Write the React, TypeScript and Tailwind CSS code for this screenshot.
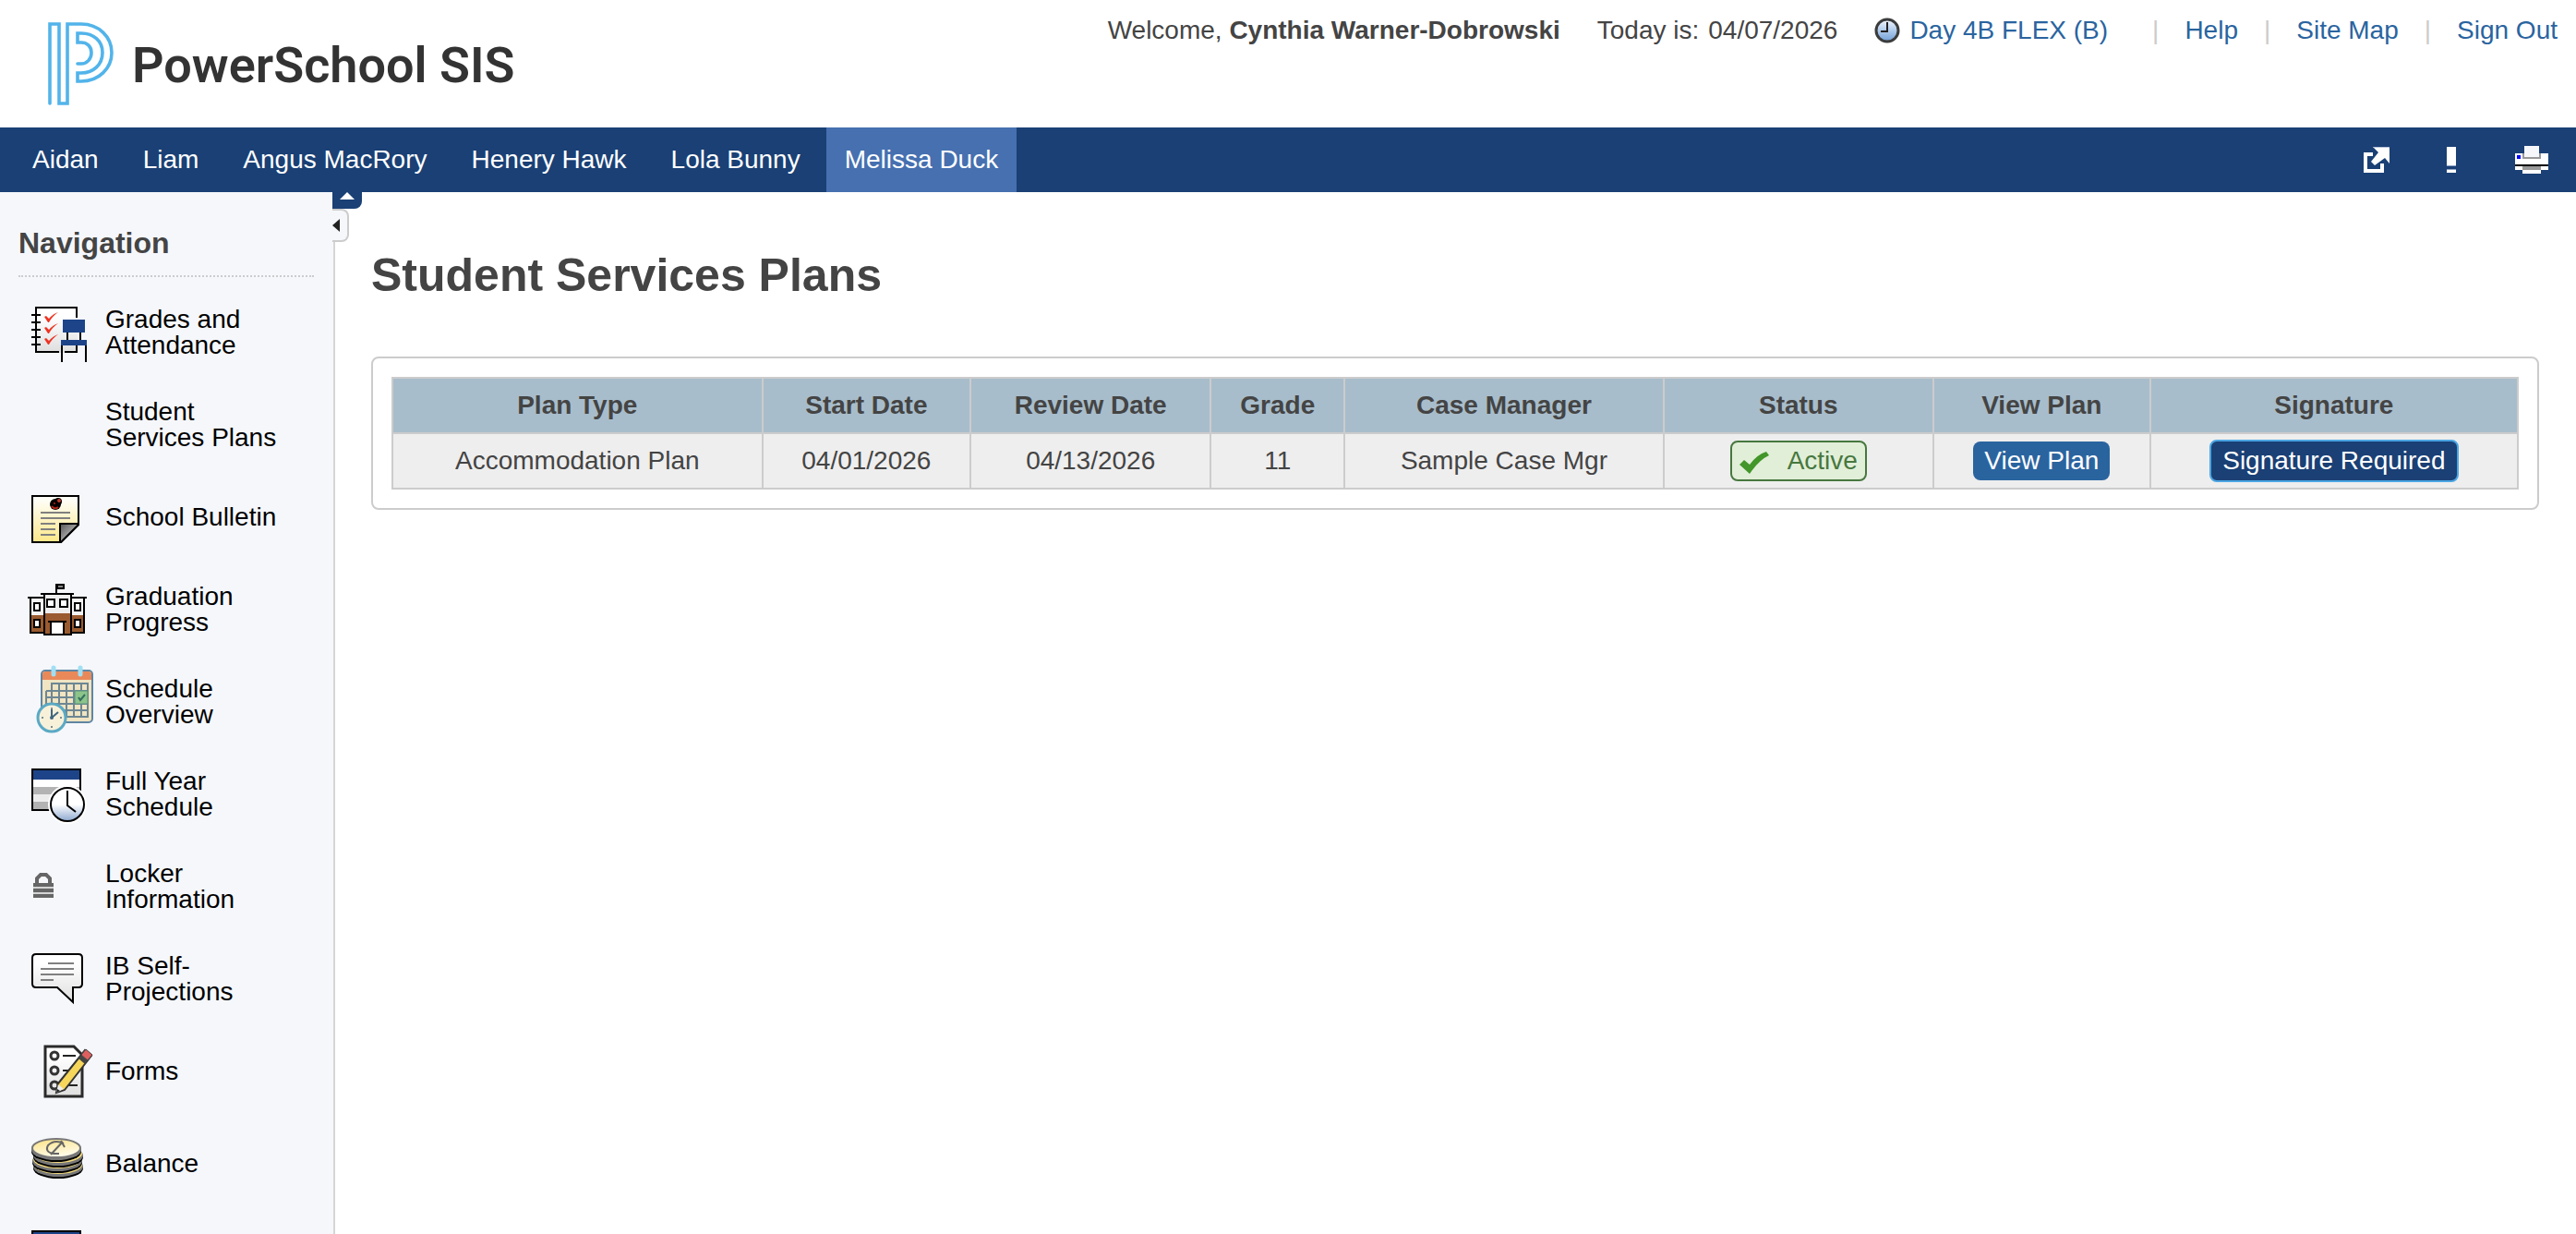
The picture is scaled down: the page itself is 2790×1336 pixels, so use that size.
import type { ReactNode } from "react"

const students = ["Aidan", "Liam", "Angus MacRory", "Henery Hawk", "Lola Bunny", "Melissa Duck"]
const activeStudent = "Melissa Duck"

const topLinks = ["Help", "Site Map", "Sign Out"]

const columns = [
  { label: "Plan Type", width: "w-[17.4%]" },
  { label: "Start Date", width: "w-[9.8%]" },
  { label: "Review Date", width: "w-[11.3%]" },
  { label: "Grade", width: "w-[6.3%]" },
  { label: "Case Manager", width: "w-[15%]" },
  { label: "Status", width: "w-[12.7%]" },
  { label: "View Plan", width: "w-[10.2%]" },
  { label: "Signature", width: "w-[17.3%]" },
]

function NavIcon({ children }: { children?: ReactNode }) {
  return (
    <svg viewBox="0 0 80 80" className="h-20 w-20 shrink-0" fill="none" aria-hidden="true">
      {children}
    </svg>
  )
}

function GradesIcon() {
  return (
    <NavIcon>
      <defs>
        <linearGradient id="paper" x1="0" y1="0" x2="0" y2="1">
          <stop offset="0.2" stopColor="#fff" />
          <stop offset="1" stopColor="#dedede" />
        </linearGradient>
      </defs>
      <path d="M10 12H56V62H10Z" fill="url(#paper)" />
      <path d="M55 24V13H11V61H36M42 61H55V54" stroke="#000" strokeWidth="2" />
      <path d="M6 21H16M6 29H16M6 37H16M6 45H16M6 53H16" stroke="#000" strokeWidth="2" />
      {[19, 31, 43].map((y) => (
        <path key={y} d={`M20 ${y + 4}l2-1 3 3 q4-5 10-7 q-6 4-10 11 h-1z`} fill="#ee3322" />
      ))}
      <path d="M45 40V48M59 40V48M39 54V72M65 54V72" stroke="#000" strokeWidth="2" />
      <path d="M40 26H64V40H40ZM38 48H66V54H38Z" fill="#1d4489" />
    </NavIcon>
  )
}

function BulletinIcon() {
  return (
    <NavIcon>
      <defs>
        <linearGradient id="note" x1="0" y1="0" x2="0" y2="1">
          <stop offset="0.1" stopColor="#fffef6" />
          <stop offset="1" stopColor="#fde788" />
        </linearGradient>
        <linearGradient id="curl" x1="0" y1="0" x2="0.7" y2="0.7">
          <stop offset="0" stopColor="#555" />
          <stop offset="1" stopColor="#bbb" />
        </linearGradient>
      </defs>
      <path d="M7 17H57V48L38 67H7Z" fill="url(#note)" stroke="#000" strokeWidth="2" />
      <path d="M16 35H48M16 41H48M16 47H32M16 53H32M16 59H32" stroke="#808080" strokeWidth="2" />
      <path d="M37 67V47H57V48L38 67Z" fill="url(#curl)" stroke="#000" strokeWidth="2" />
      <circle cx="32" cy="26" r="6" fill="#000" />
      <circle cx="35" cy="23" r="4" fill="#000" />
      <path d="M28 28Q31 32 35 29" stroke="#b3261a" strokeWidth="2" />
      <circle cx="31" cy="25" r="1" fill="#b3261a" />
      <circle cx="36" cy="22" r="2" fill="#c03a2e" />
    </NavIcon>
  )
}

function SchoolIcon() {
  return (
    <NavIcon>
      <path d="M33 12V24" stroke="#000" strokeWidth="2" />
      <path d="M34 13H41V17H34Z" fill="#888" stroke="#000" strokeWidth="2" />
      <path d="M5 28H63V46H5Z" fill="#f4f4f4" />
      <path d="M5 46H63V65H5Z" fill="#9a5b30" />
      <path d="M20 24H49V44H20Z" fill="#efefef" />
      <path d="M20 44H49V67H20Z" fill="#9a5b30" />
      <path d="M2 27H19M50 27H66M16 23H52" stroke="#000" strokeWidth="2" />
      <path d="M5 27V65H19M63 27V65H50M20 23V67H49V23" stroke="#000" strokeWidth="2" />
      <path
        d="M9 33H15V41H9ZM53 33H59V41H53ZM9 51H15V59H9ZM53 51H59V59H53ZM23 29H31V37H23ZM37 29H45V37H37Z"
        fill="#fff"
        stroke="#000"
        strokeWidth="2"
      />
      <path d="M27 53H41V67H27Z" fill="#fff" stroke="#000" strokeWidth="2" />
      <path d="M24 53H44" stroke="#000" strokeWidth="2" />
    </NavIcon>
  )
}

function OverviewIcon() {
  return (
    <NavIcon>
      <rect x="17" y="6" width="55" height="56" rx="4" fill="#f0e4c2" stroke="#5f86a3" strokeWidth="2" />
      <path d="M18 16V10Q18 7 21 7H68Q71 7 71 10V16Z" fill="#e9895a" />
      <path
        d="M28 20H67V56H28ZM22 28H67M22 35H67M22 42H67M28 49H67M36 20V56M44 20V56M52 20V56M60 20V56M22 28V44"
        stroke="#6d8794"
        strokeWidth="2"
      />
      <path d="M53 28H67V42H53Z" fill="#8cc48a" stroke="#5c9080" />
      <path d="M57 35L59 38L64 32" stroke="#34705f" strokeWidth="2" />
      <path d="M30 3V10M59 3V10" stroke="#a0dff3" strokeWidth="5" strokeLinecap="round" />
      <circle cx="28" cy="57" r="15" fill="#f8f1da" stroke="#5aa9c4" strokeWidth="3" />
      <path d="M28 57L35 51M28 57V48" stroke="#3e6680" strokeWidth="2" />
      <circle cx="28" cy="57" r="2" fill="#3e6680" />
      <path d="M28 46V48M28 66V68M17 57H19M37 57H39" stroke="#7d8f95" strokeWidth="2" />
    </NavIcon>
  )
}

function YearIcon() {
  return (
    <NavIcon>
      <defs>
        <linearGradient id="face" x1="0" y1="0" x2="0" y2="1">
          <stop offset="0.5" stopColor="#fff" />
          <stop offset="1" stopColor="#8da8cf" />
        </linearGradient>
      </defs>
      <path d="M7 13H59V57H7Z" fill="#fff" />
      <path d="M7 13H59V24H7Z" fill="#1d4489" />
      <path d="M7 32H59V40H7ZM7 48H59V56H7Z" fill="#b3b3b3" />
      <path d="M7 40H59V48H7Z" fill="#ececec" />
      <path d="M7 13H59V57H7Z" stroke="#000" strokeWidth="2" />
      <circle cx="45" cy="51" r="21" fill="#fff" />
      <circle cx="45" cy="51" r="18" fill="url(#face)" stroke="#000" strokeWidth="2" />
      <path d="M45 36V52L54 59" stroke="#000" strokeWidth="2" />
    </NavIcon>
  )
}

function LockerIcon() {
  return (
    <NavIcon>
      <path d="M8 36H30V52H8Z" fill="#d4d4d4" />
      <path d="M12 37V31L16 27H22L26 31V37" stroke="#666" strokeWidth="4" />
      <path d="M8 38H30M8 44H30M8 50H30" stroke="#666" strokeWidth="4" />
    </NavIcon>
  )
}

function CommentIcon() {
  return (
    <NavIcon>
      <path
        d="M11 13H57Q61 13 61 17V45Q61 49 57 49H51V65L34 49H11Q7 49 7 45V17Q7 13 11 13Z"
        fill="url(#paper)"
        stroke="#000"
        strokeWidth="2"
      />
      <path d="M24 23H52M16 29H52M16 35H52M16 41H30" stroke="#808080" strokeWidth="2" />
    </NavIcon>
  )
}

function FormsIcon() {
  return (
    <NavIcon>
      <path d="M21 13H52L61 22V67H21Z" fill="url(#paper)" stroke="#2a2a2a" strokeWidth="3" />
      <path d="M40 23H54M40 39H50M44 55H56" stroke="#222" strokeWidth="2" />
      <g stroke="#333" strokeWidth="3">
        <circle cx="31" cy="23" r="4" />
        <circle cx="31" cy="39" r="4" />
        <circle cx="31" cy="55" r="4" />
      </g>
      <path d="M33 63L35 53L64 17L71 23L42 60Z" fill="#f6d65b" stroke="#333" strokeWidth="2" />
      <path d="M57 26L60 22L67 28L64 32Z" fill="#444" />
      <path d="M60 22L65 16L72 22L67 28Z" fill="#dd5f5f" stroke="#444" />
      <path d="M33 63L35 54L41 59Z" fill="#eee" />
      <path d="M33 63L34 59L37 61Z" fill="#222" />
    </NavIcon>
  )
}

function BalanceIcon() {
  return (
    <NavIcon>
      <defs>
        <linearGradient id="coin" x1="0" y1="0" x2="0.4" y2="1">
          <stop offset="0" stopColor="#fbe282" />
          <stop offset="1" stopColor="#fffbe8" />
        </linearGradient>
      </defs>
      {[
        [35, 44],
        [34, 38],
        [35, 32],
        [33, 26],
      ].map(([cx, cy]) => (
        <g key={cy}>
          <ellipse cx={cx} cy={cy + 1} rx="27" ry="11" fill="#000" />
          <ellipse cx={cx} cy={cy - 1} rx="27" ry="11" fill="#777" />
          <ellipse cx={cx} cy={cy - 3} rx="26" ry="10" fill="#f5dc7c" />
        </g>
      ))}
      <ellipse cx="33" cy="23" rx="26" ry="10" fill="url(#coin)" stroke="#777" strokeWidth="2" />
      <path d="M41 18Q31 13 24 20Q20 27 30 29L36 29M27 30L40 16M38 15L42 22" stroke="#666" strokeWidth="2" />
    </NavIcon>
  )
}

function CalendarIcon() {
  return (
    <NavIcon>
      <path d="M7 13H59V57H7Z" fill="#fff" />
      <path d="M7 13H59V24H7Z" fill="#1d4489" />
      <path d="M7 13H59V57H7Z" stroke="#000" strokeWidth="2" />
    </NavIcon>
  )
}

const navItems = [
  { label: "Grades and Attendance", icon: GradesIcon },
  { label: "Student Services Plans", icon: NavIcon },
  { label: "School Bulletin", icon: BulletinIcon },
  { label: "Graduation Progress", icon: SchoolIcon },
  { label: "Schedule Overview", icon: OverviewIcon },
  { label: "Full Year Schedule", icon: YearIcon },
  { label: "Locker Information", icon: LockerIcon },
  { label: "IB Self-Projections", icon: CommentIcon },
  { label: "Forms", icon: FormsIcon },
  { label: "Balance", icon: BalanceIcon },
  { label: "", icon: CalendarIcon },
]

function Logo() {
  return (
    <a href="#" className="flex items-center gap-5 text-[#333]">
      <svg viewBox="0 0 72 92" className="h-[92px] w-[72px]" fill="none" stroke="#52b4ea" strokeWidth="3.6" strokeLinecap="round">
        <path d="M3 89V3H13V89H22V3H37C56 3 70 17 70 34S56 65 37 65H33V56H37C50 56 60 47 60 34S50 13 37 13H33V23H37C43 23 48 27 48 34S43 46 37 46H33" />
      </svg>
      <span className="pt-1 font-[Roboto,sans-serif] text-[54px] leading-[60px] font-semibold">PowerSchool SIS</span>
    </a>
  )
}

function Header() {
  return (
    <header className="flex h-[138px] justify-between pr-5 pl-[51px]">
      <div className="flex items-center">
        <Logo />
      </div>
      <div className="flex h-[66px] items-center text-[#444]">
        <span>
          Welcome, <strong>Cynthia Warner-Dobrowski</strong>
        </span>
        <span className="ml-10 flex gap-[10px]">
          <span>Today is:</span>
          <span>04/07/2026</span>
        </span>
        <a href="#" className="ml-10 flex items-center gap-[10px] text-[#2a649f]">
          <svg viewBox="0 0 28 28" className="h-7 w-7" fill="none" aria-hidden="true">
            <defs>
              <linearGradient id="clock" x1="0" y1="0" x2="0" y2="1">
                <stop offset="0.1" stopColor="#e4eefa" />
                <stop offset="1" stopColor="#6f9fd8" />
              </linearGradient>
            </defs>
            <circle cx="14" cy="14" r="12" fill="url(#clock)" stroke="#3c3c3c" strokeWidth="3" />
            <path d="M14 5V15H7" stroke="#222" strokeWidth="2" />
          </svg>
          Day 4B FLEX (B)
        </a>
        <nav className="ml-5 flex">
          {topLinks.map((link) => (
            <span key={link} className="ml-7 flex gap-7">
              <span className="text-[#ccc]">|</span>
              <a href="#" className="text-[#2a649f]">
                {link}
              </a>
            </span>
          ))}
        </nav>
      </div>
    </header>
  )
}

function StudentBar() {
  return (
    <div className="flex h-[70px] items-stretch justify-between bg-[#1a4075] pr-[30px] pl-[15px] text-white">
      <nav className="flex gap-2">
        {students.map((name) => (
          <a
            key={name}
            href="#"
            className={`flex items-center px-5 ${name === activeStudent ? "bg-[#4670b0]" : ""}`}
          >
            {name}
          </a>
        ))}
      </nav>
      <div className="flex items-center">
        <button type="button" aria-label="Open in new window" className="mr-[62px]">
          <svg viewBox="0 0 28 28" className="h-7 w-7" fill="none">
            <path d="M10 8H2V26H20V18" stroke="#fff" strokeWidth="4" />
            <path d="M10 0H28V18L23 12L12 20L8 16L16 6Z" fill="#fff" />
            <path d="M10 0H28V1H11Z" fill="#b9c4d8" />
          </svg>
        </button>
        <button type="button" aria-label="Alerts" className="mr-16">
          <svg viewBox="0 0 10 28" className="h-7 w-[10px]" fill="#fff">
            <path d="M0 0H10V20H0ZM0 25H10V28H0Z" />
            <path d="M0 20H10V21H0ZM0 24H10V25H0Z" fill="#8fa3c2" />
          </svg>
        </button>
        <button type="button" aria-label="Print">
          <svg viewBox="0 0 36 30" className="h-[30px] w-9">
            <path d="M0 8H36V26H28V30H8V26H0Z" fill="#fff" />
            <path d="M8 8H28V14H8ZM8 22H28V26H8Z" fill="#999" />
            <path d="M10 0H26V12H10Z" fill="#f6f7fb" />
            <path d="M0 20H36V22H0Z" fill="#000" />
            <path d="M2 10H6V14H2Z" fill="#00f" />
          </svg>
        </button>
      </div>
    </div>
  )
}

function Sidebar() {
  return (
    <aside className="relative w-[363px] shrink-0 border-r-2 border-[#d4d6d6] bg-[#f5f7fb]">
      <h2 className="mr-[21px] ml-5 border-b-2 border-dotted border-[#ccc] pt-[35px] pb-[15px] text-[32px] leading-10 font-bold text-[#444]">
        Navigation
      </h2>
      <ul className="pt-[10px]">
        {navItems.map(({ label, icon: Icon }) => (
          <li key={label}>
            <a href="#" className="flex h-[100px] items-center gap-[6px] pr-14 pl-7 leading-7 text-black">
              <Icon />
              {label}
            </a>
          </li>
        ))}
      </ul>
      <button
        type="button"
        aria-label="Hide header"
        className="absolute top-0 left-[360px] flex h-[18px] w-8 justify-center rounded-br-lg bg-[#1a4075]"
      >
        <svg viewBox="0 0 16 8" className="h-2 w-4" fill="#fff">
          <path d="M8 0L16 8H0Z" />
        </svg>
      </button>
      <button
        type="button"
        aria-label="Hide navigation"
        className="absolute top-[18px] left-[360px] flex h-9 w-[18px] items-center rounded-r-lg border-2 border-l-0 border-[#ccc] bg-[#f5f7fb]"
      >
        <svg viewBox="0 0 8 14" className="h-[14px] w-2" fill="#222">
          <path d="M0 7L8 0V14Z" />
        </svg>
      </button>
    </aside>
  )
}

function PlansTable() {
  const cell = "h-[60px] border-2 border-[#ccc] p-0"
  return (
    <div className="rounded-lg border-2 border-[#ccc] p-5">
      <table className="w-full table-fixed border-collapse text-center">
        <thead>
          <tr className="bg-[#a8bdcb]">
            {columns.map((col) => (
              <th key={col.label} scope="col" className={`${cell} ${col.width} font-bold`}>
                {col.label}
              </th>
            ))}
          </tr>
        </thead>
        <tbody>
          <tr className="bg-[#eee]">
            <td className={cell}>Accommodation Plan</td>
            <td className={cell}>04/01/2026</td>
            <td className={cell}>04/13/2026</td>
            <td className={cell}>11</td>
            <td className={cell}>Sample Case Mgr</td>
            <td className={cell}>
              <div className="flex justify-center">
                <span className="flex h-11 items-center gap-5 rounded-lg border-2 border-[#47773f] bg-[#e1efd8] px-2 text-[#47773f]">
                  <svg viewBox="0 0 32 24" className="mt-1 h-6 w-8" fill="#43962a" aria-hidden="true">
                    <path d="M0 14L5 9L11 14Q19 3 29 0L32 4Q21 9 11 24Z" />
                  </svg>
                  Active
                </span>
              </div>
            </td>
            <td className={cell}>
              <div className="flex justify-center">
                <button type="button" className="h-[42px] rounded-lg bg-[#2a649f] px-3 text-white">
                  View Plan
                </button>
              </div>
            </td>
            <td className={cell}>
              <div className="flex justify-center">
                <button type="button" className="h-[46px] rounded-lg border-2 border-[#4ba5e3] bg-[#1a4075] px-3 text-white">
                  Signature Required
                </button>
              </div>
            </td>
          </tr>
        </tbody>
      </table>
    </div>
  )
}

export default function App() {
  return (
    <div className="flex h-screen flex-col overflow-hidden bg-white font-['Liberation_Sans',Arial,sans-serif] text-[28px] leading-8 text-[#444]">
      <Header />
      <StudentBar />
      <div className="flex min-h-0 flex-1">
        <Sidebar />
        <main className="min-w-0 flex-1 pt-[62px] pr-10 pl-[39px]">
          <h1 className="mb-[60px] text-[50px] leading-[56px] font-bold">Student Services Plans</h1>
          <PlansTable />
        </main>
      </div>
    </div>
  )
}
